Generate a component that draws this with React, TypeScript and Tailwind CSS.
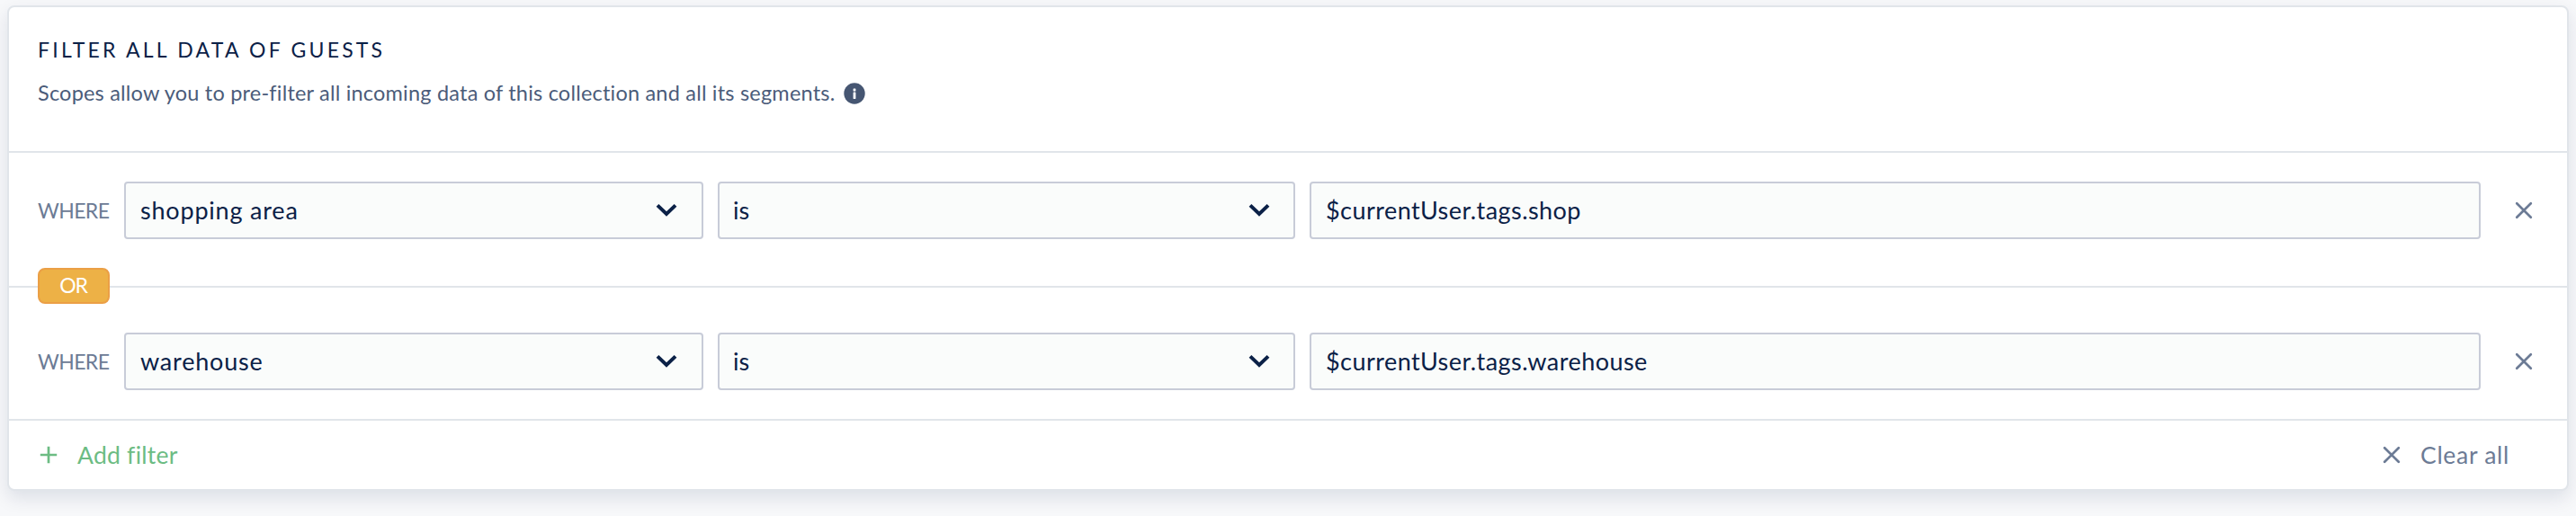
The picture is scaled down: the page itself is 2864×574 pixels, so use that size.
import type { ReactNode } from "react";

function Chevron() {
  return (
    <svg width="24" height="16" viewBox="0 0 24 16" fill="none" className="shrink-0">
      <path d="M2 2.4 12 12 22 2.4" stroke="#0b2147" strokeWidth="4" />
    </svg>
  );
}

function Cross() {
  return (
    <svg width="20" height="20" viewBox="0 0 20 20" fill="none" className="shrink-0">
      <path d="M2.2 2.2 17.8 17.8M17.8 2.2 2.2 17.8" stroke="#6c7b95" strokeWidth="2.7" strokeLinecap="round" />
    </svg>
  );
}

function Plus() {
  return (
    <svg width="20" height="20" viewBox="0 0 20 20" fill="none" className="shrink-0">
      <path d="M10 .8V19.2M.8 10H19.2" stroke="#6cbc83" strokeWidth="2.7" />
    </svg>
  );
}

function Info() {
  return (
    <svg width="24" height="24" viewBox="0 0 24 24" className="shrink-0">
      <circle cx="12" cy="12" r="11.7" fill="#465672" />
      <rect x="10.6" y="6.6" width="2.8" height="2.8" rx=".5" fill="#fff" />
      <rect x="10.6" y="10.6" width="2.8" height="7.4" rx=".4" fill="#fff" />
    </svg>
  );
}

function Select({ className, children }: { className: string; children: ReactNode }) {
  return (
    <button
      type="button"
      className={`flex h-16 shrink-0 items-center justify-between rounded-[4px] border-2 border-[#c8ccd8] bg-[#fafcfb] text-left text-[27px] leading-8 text-[#0b2147] ${className}`}
    >
      {children}
      <Chevron />
    </button>
  );
}

function FilterRow({ field, value }: { field: string; value: string }) {
  return (
    <div className="flex items-center">
      <span className="w-[96px] shrink-0 text-[23px] leading-8 tracking-[-0.6px] text-[#6c7b95]">WHERE</span>
      <Select className="w-[644px] pr-[27px] pl-4">
        <span className="tracking-[0.8px]">{field}</span>
      </Select>
      <Select className="ml-4 w-[642px] pr-[26px] pl-[15px]">
        <span>is</span>
      </Select>
      <div className="ml-4 flex h-16 flex-1 items-center rounded-[4px] border-2 border-[#c8ccd8] bg-[#fafcfb] pl-4 text-[27px] leading-8 tracking-[0.45px] text-[#0b2147]">
        {value}
      </div>
      <button type="button" className="mr-[38px] ml-[38px]">
        <Cross />
      </button>
    </div>
  );
}

export default function App() {
  return (
    <div className="h-[574px] w-full overflow-hidden bg-[#f7f8fa] px-2 pt-[6px] font-['Lato',sans-serif]">
      <section className="h-[540px] rounded-[8px] border-2 border-[#e1e5ea] bg-white shadow-[0_8px_20px_rgba(11,23,71,0.11)]">
        <header className="h-[162px] border-b-2 border-[#e1e5ea] px-8 pt-8">
          <h1 className="text-[23px] leading-[30px] tracking-[3.22px] text-[#0b2147] uppercase">Filter all data of guests</h1>
          <div className="mt-[18px] flex h-[30px] items-center">
            <p className="text-[23.5px] leading-[30px] tracking-[0.205px] text-[#4b5c7a]">
              Scopes allow you to pre-filter all incoming data of this collection and all its segments.
            </p>
            <span className="mt-[2px] ml-[10px]">
              <Info />
            </span>
          </div>
        </header>

        <div className="h-[148px] pt-8 pl-8">
          <FilterRow field="shopping area" value="$currentUser.tags.shop" />
        </div>

        <div className="relative h-[2px] bg-[#e1e5ea]">
          <span className="absolute top-[-20px] left-8 flex h-10 w-20 items-center justify-center rounded-[8px] border-2 border-[#eb9f46] bg-[#edb146] pr-[1px] pb-[2px] text-[23px] leading-8 tracking-[-1.2px] text-white">
            OR
          </span>
        </div>

        <div className="h-[148px] border-b-2 border-[#e1e5ea] pt-[50px] pl-8">
          <FilterRow field="warehouse" value="$currentUser.tags.warehouse" />
        </div>

        <footer className="flex h-[76px] items-center justify-between pr-[64px] pl-[34px] text-[26.5px] leading-8">
          <button type="button" className="flex items-center gap-[22px] text-[#6cbc83]">
            <Plus />
            <span className="tracking-[0.25px]">Add filter</span>
          </button>
          <button type="button" className="flex items-center gap-[22px] text-[#6c7b95]">
            <Cross />
            <span className="tracking-[0.7px]">Clear all</span>
          </button>
        </footer>
      </section>
    </div>
  );
}
